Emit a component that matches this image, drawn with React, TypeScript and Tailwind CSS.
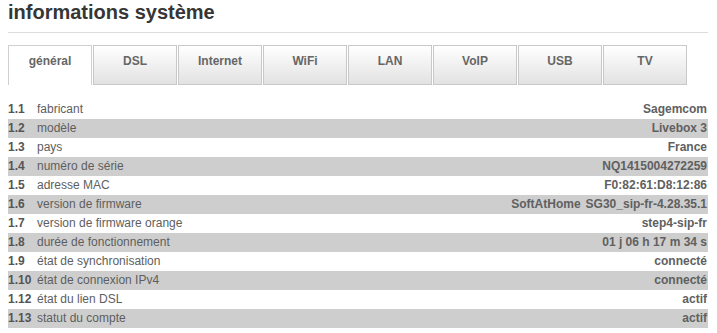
import React from 'react';

const tabs = ['général', 'DSL', 'Internet', 'WiFi', 'LAN', 'VoIP', 'USB', 'TV'];

const rows: { num: string; label: string; value: string[] }[] = [
  { num: '1.1', label: 'fabricant', value: ['Sagemcom'] },
  { num: '1.2', label: 'modèle', value: ['Livebox 3'] },
  { num: '1.3', label: 'pays', value: ['France'] },
  { num: '1.4', label: 'numéro de série', value: ['NQ1415004272259'] },
  { num: '1.5', label: 'adresse MAC', value: ['F0:82:61:D8:12:86'] },
  { num: '1.6', label: 'version de firmware', value: ['SoftAtHome', 'SG30_sip-fr-4.28.35.1'] },
  { num: '1.7', label: 'version de firmware orange', value: ['step4-sip-fr'] },
  { num: '1.8', label: 'durée de fonctionnement', value: ['01 j 06 h 17 m 34 s'] },
  { num: '1.9', label: 'état de synchronisation', value: ['connecté'] },
  { num: '1.10', label: 'état de connexion IPv4', value: ['connecté'] },
  { num: '1.12', label: 'état du lien DSL', value: ['actif'] },
  { num: '1.13', label: 'statut du compte', value: ['actif'] },
];

export default function App() {
  return (
    <div className="min-h-[333px] bg-white font-['Liberation_Sans',Arial,sans-serif]">
      <div className="ml-2 w-[700px]">
        <h1 className="text-[20px] leading-[24px] font-bold text-[#363636]">informations système</h1>
        <div className="mt-2 border-t border-[#dcdcdc]" />

        {/* onglets */}
        <div className="mt-3 flex gap-px">
          {tabs.map((t, i) => (
            <div
              key={t}
              className={
                i === 0
                  ? 'h-10 w-[84px] border border-b-0 border-[#d0d0d0] bg-white pt-[7px] text-center text-[12px] leading-[16px] font-bold text-[#666]'
                  : 'h-10 w-[84px] border border-[#c8c8c8] bg-gradient-to-b from-white to-[#e2e2e2] pt-[7px] text-center text-[12px] leading-[16px] font-bold text-[#666]'
              }
            >
              {t}
            </div>
          ))}
        </div>

        {/* tableau */}
        <div className="mt-[15px]">
          {rows.map((r, i) => (
            <div
              key={r.num}
              className={`flex h-[19px] items-center pr-px text-[12px] leading-[19px] text-[#5e5e5e] ${i % 2 === 1 ? 'bg-[#cecece]' : ''}`}
            >
              <span className="w-[29px] shrink-0 font-bold text-[#555]">{r.num}</span>
              <span className="flex-1">{r.label}</span>
              <span className="flex gap-[5px] font-bold text-[#606060]">
                {r.value.map((v) => (
                  <span key={v}>{v}</span>
                ))}
              </span>
            </div>
          ))}
        </div>
      </div>
    </div>
  );
}
